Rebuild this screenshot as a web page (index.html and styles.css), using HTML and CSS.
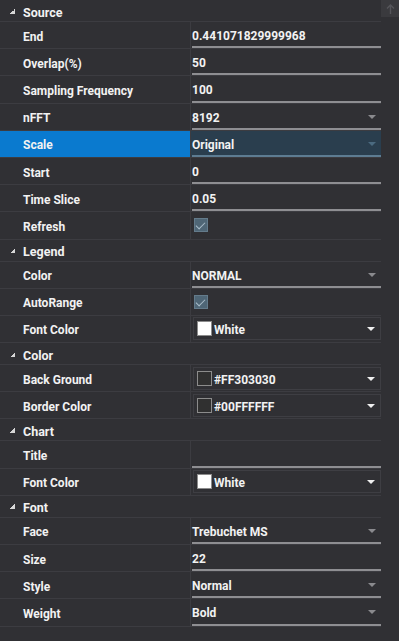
FILE: index.html
```html
<!DOCTYPE html>
<html lang="en">
<head>
  <meta charset="UTF-8" />
  <title>Chart Properties</title>
  <link rel="stylesheet" href="styles.css">
</head>
<body>
  <div class="panel">
    <div class="grid">

      <div class="cat"><span class="arrow"></span>Source</div>
      <div class="row"><div class="name">End</div><div class="val"><div class="text">0.441071829999968</div></div></div>
      <div class="row"><div class="name">Overlap(%)</div><div class="val"><div class="text">50</div></div></div>
      <div class="row"><div class="name">Sampling Frequency</div><div class="val"><div class="text">100</div></div></div>
      <div class="row"><div class="name">nFFT</div><div class="val"><div class="text combo">8192</div></div></div>
      <div class="row selected"><div class="name">Scale</div><div class="val"><div class="text combo">Original</div></div></div>
      <div class="row"><div class="name">Start</div><div class="val"><div class="text">0</div></div></div>
      <div class="row"><div class="name">Time Slice</div><div class="val"><div class="text">0.05</div></div></div>
      <div class="row"><div class="name">Refresh</div><div class="val"><span class="check"></span></div></div>

      <div class="cat"><span class="arrow"></span>Legend</div>
      <div class="row"><div class="name">Color</div><div class="val"><div class="text combo">NORMAL</div></div></div>
      <div class="row"><div class="name">AutoRange</div><div class="val"><span class="check"></span></div></div>
      <div class="row"><div class="name">Font Color</div><div class="val"><div class="picker"><span class="swatch white"></span>White</div></div></div>

      <div class="cat"><span class="arrow"></span>Color</div>
      <div class="row"><div class="name">Back Ground</div><div class="val"><div class="picker"><span class="swatch dark"></span>#FF303030</div></div></div>
      <div class="row"><div class="name">Border Color</div><div class="val"><div class="picker"><span class="swatch dark"></span>#00FFFFFF</div></div></div>

      <div class="cat"><span class="arrow"></span>Chart</div>
      <div class="row"><div class="name">Title</div><div class="val"><div class="text"></div></div></div>
      <div class="row"><div class="name">Font Color</div><div class="val"><div class="picker"><span class="swatch white"></span>White</div></div></div>

      <div class="cat"><span class="arrow"></span>Font</div>
      <div class="row"><div class="name">Face</div><div class="val"><div class="text combo">Trebuchet MS</div></div></div>
      <div class="row"><div class="name">Size</div><div class="val"><div class="text">22</div></div></div>
      <div class="row"><div class="name">Style</div><div class="val"><div class="text combo">Normal</div></div></div>
      <div class="row"><div class="name">Weight</div><div class="val"><div class="text combo">Bold</div></div></div>

    </div>
    <div class="scroll">
      <div class="scroll-btn">
        <svg width="9" height="10" viewBox="0 0 9 10"><path d="M4.5 1 L4.5 10 M1 4.5 L4.5 1 L8 4.5" stroke="#56565b" stroke-width="1.4" fill="none"/></svg>
      </div>
    </div>
  </div>
</body>
</html>
```

FILE: styles.css
```css
* { box-sizing: border-box; }
body {
  margin: 0;
  background: #303034;
  font-family: Roboto, "Liberation Sans", sans-serif;
  font-size: 12px;
  font-weight: 700;
  color: #f2f2f2;
}
.panel {
  display: flex;
  width: 399px;
  height: 641px;
  background: #303034;
}
.grid {
  width: 381px;
}
.cat {
  height: 22px;
  display: flex;
  align-items: center;
  padding-left: 10px;
  padding-top: 3px;
  border-bottom: 1px solid #3c3c41;
  font-size: 12.5px;
}
.arrow {
  width: 5px;
  height: 5px;
  margin-right: 8px;
  margin-top: -2px;
  background: linear-gradient(to bottom right, transparent 50%, #d6d6d6 50%);
}
.row {
  display: grid;
  grid-template-columns: 190px 1fr;
  height: 27.2px;
  border-bottom: 1px solid #3c3c41;
}
.name {
  display: flex;
  align-items: center;
  padding-left: 23px;
  padding-top: 3px;
}
.val {
  display: flex;
  align-items: center;
  border-left: 1px solid #3c3c41;
  padding-left: 1px;
}
.text {
  position: relative;
  display: flex;
  align-items: center;
  width: 100%;
  height: 100%;
  border-bottom: 2px solid #8e8e92;
  padding-top: 4px;
}
.combo::after {
  content: "";
  position: absolute;
  right: 5px;
  top: 11px;
  border-left: 4px solid transparent;
  border-right: 4px solid transparent;
  border-top: 4px solid #8a8a8e;
}
.selected .name {
  background: #0a7acf;
}
.selected .val {
  background: #2a3e4e;
}
.selected .text {
  border-bottom-color: #5d7c92;
}
.selected .combo::after {
  border-top-color: #4b6a80;
}
.check {
  width: 14px;
  height: 14px;
  margin-left: 2px;
  border: 1px solid #647b8b;
  background: #4f6676;
  position: relative;
}
.check::after {
  content: "";
  position: absolute;
  left: 3px;
  top: 1px;
  width: 4px;
  height: 8px;
  border-right: 1.5px solid #aabdca;
  border-bottom: 1.5px solid #aabdca;
  transform: rotate(45deg);
}
.picker {
  position: relative;
  display: flex;
  align-items: center;
  width: 100%;
  height: 23px;
  margin-left: 1px;
  border: 1px solid #3e3e43;
  padding-left: 3px;
  padding-top: 3px;
}
.picker::after {
  content: "";
  position: absolute;
  right: 5px;
  top: 9px;
  border-left: 4px solid transparent;
  border-right: 4px solid transparent;
  border-top: 4px solid #f0f0f0;
}
.swatch {
  width: 15px;
  height: 15px;
  margin-right: 2px;
  margin-top: -3px;
  border: 1px solid #8c8c8c;
}
.swatch.white { background: #ffffff; }
.swatch.dark { background: #303030; }
.scroll {
  width: 18px;
  background: #303034;
}
.scroll-btn {
  height: 17px;
  background: #3a3a3e;
  display: flex;
  align-items: center;
  justify-content: center;
}
```
